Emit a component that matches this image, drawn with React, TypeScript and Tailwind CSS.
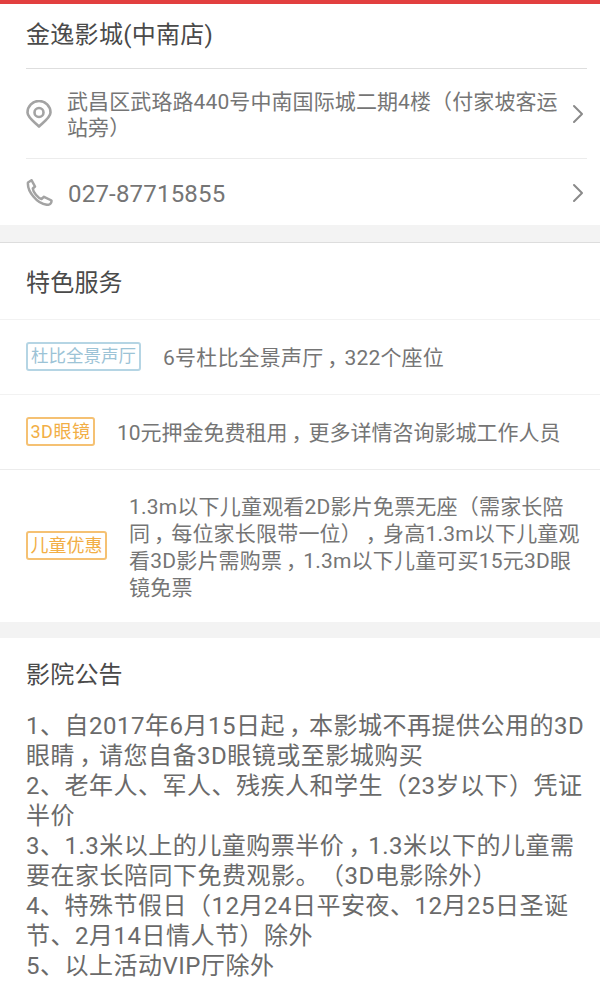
import { ChevronRight } from "lucide-react";

const font = "font-['Roboto','Noto_Sans_CJK_SC',sans-serif]";

// the comma sits in the middle of its cell in the screenshot
function Comma() {
  return <span className="inline-block w-[1em] text-center [font-feature-settings:'palt']">，</span>;
}

function PinIcon() {
  return (
    <svg width="26" height="28" viewBox="0 0 26 28" fill="none" stroke="#a3a3a3" strokeWidth="2.600">
      <path d="M13 26.500C9 22.500 1.500 17.500 1.500 12.500a11.500 11.500 0 0 1 23 0C24.500 17.500 17 22.500 13 26.500Z" strokeLinejoin="round" />
      <circle cx="13" cy="12.500" r="4.500" />
    </svg>
  );
}

function PhoneIcon() {
  return (
    <svg width="27" height="27" viewBox="0 0 27 27" fill="none" stroke="#a3a3a3" strokeWidth="2.500" strokeLinejoin="round">
      <path d="M2 3.500 5.500 1.200 9 7.500 6.800 9.500C7 13 12 19 15.500 20L18 17.800 25.500 21.500C25.800 24.500 23.500 26 21 25.800 11 25 1 12 2 3.500Z" />
    </svg>
  );
}

function Tag({ text, blue }: { text: string; blue?: boolean }) {
  return (
    <span
      className={
        blue
          ? "shrink-0 rounded-[3px] border-2 border-[#b5d5e4] px-[3px] h-[29px] flex items-center text-[17.500px] text-[#9cc3d6] whitespace-nowrap"
          : "shrink-0 rounded-[3px] border-2 border-[#f5c173] px-[2.500px] h-[29px] flex items-center text-[18px] text-[#f2ae45] whitespace-nowrap"
      }
    >
      {text}
    </span>
  );
}

export default function App() {
  return (
    <div className={`${font} [text-spacing-trim:space-all] w-[600px] h-[1000px] overflow-hidden bg-white`}>
      <div className="h-[4px] bg-[#e23f3f]" />
      <div className="px-[26px] h-[64px] flex items-center text-[24px] tracking-[0.3px] text-[#4a4a4a] pb-[2px]">金逸影城(中南店)</div>
      <div className="ml-[26px] mr-[13px] border-t border-[#dedede]">
        <div className="h-[89px] flex items-center">
          <div className="w-[41px] shrink-0">
            <PinIcon />
          </div>
          <div className="flex-1 text-[21px] tracking-[0.1px] leading-[26px] text-[#757575] pt-[2px]">武昌区武珞路440号中南国际城二期4楼（付家坡客运站旁）</div>
          <ChevronRight size={32} strokeWidth={1.500} className="shrink-0 text-[#8a8a8a] -mr-[7px] -ml-[8px]" />
        </div>
        <div className="border-t border-[#ececec] h-[67px] flex items-center">
          <div className="w-[42px] shrink-0">
            <PhoneIcon />
          </div>
          <div className="flex-1 text-[24px] tracking-[0.2px] text-[#757575] pt-[3px]">027-87715855</div>
          <ChevronRight size={32} strokeWidth={1.500} className="shrink-0 text-[#8a8a8a] -mr-[7px] mt-[2px]" />
        </div>
      </div>
      <div className="h-[18px] bg-[#f3f3f3] border-b border-[#dddddd]" />
      <div className="px-[26px] h-[77px] flex items-center text-[24px] tracking-[0.2px] text-[#4a4a4a] border-b border-[#f2f2f2] pt-[3px]">特色服务</div>
      <div className="h-[75px] px-[26px] pb-[2px] flex items-center gap-[22px] border-b border-[#f2f2f2]">
        <Tag text="杜比全景声厅" blue />
        <span className="text-[21px] tracking-[0.2px] text-[#757575] pt-[5px]">
          6号杜比全景声厅
          <Comma />
          322个座位
        </span>
      </div>
      <div className="h-[75px] px-[26px] pb-[2px] flex items-center gap-[22px] border-b border-[#ececec]">
        <span className="shrink-0 tracking-[0.5px]">
          <Tag text="3D眼镜" />
        </span>
        <span className="text-[21px] text-[#757575] pt-[5px]">
          10元押金免费租用
          <Comma />
          更多详情咨询影城工作人员
        </span>
      </div>
      <div className="h-[152px] pl-[26px] pb-[2px] flex items-center gap-[22px]">
        <Tag text="儿童优惠" />
        <div className="text-[21px] tracking-[0.2px] leading-[27px] text-[#757575] pt-[5px] whitespace-nowrap">
          <div>1.3m以下儿童观看2D影片免票无座（需家长陪</div>
          <div>
            同
            <Comma />
            每位家长限带一位）
            <Comma />
            身高1.3m以下儿童观
          </div>
          <div>
            看3D影片需购票
            <Comma />
            1.3m以下儿童可买15元3D眼
          </div>
          <div>镜免票</div>
        </div>
      </div>
      <div className="h-[16px] bg-[#f3f3f3]" />
      <div className="px-[26px] h-[72px] flex items-center text-[24px] tracking-[0.2px] text-[#4a4a4a] pt-[2px]">影院公告</div>
      <div className="pl-[26px] text-[24px] pt-[1px] tracking-[0.5px] leading-[30px] text-[#6a6a6a] whitespace-nowrap">
        <div>
          1、自2017年6月15日起
          <Comma />
          本影城不再提供公用的3D
        </div>
        <div>
          眼睛
          <Comma />
          请您自备3D眼镜或至影城购买
        </div>
        <div>2、老年人、军人、残疾人和学生（23岁以下）凭证</div>
        <div>半价</div>
        <div>
          3、1.3米以上的儿童购票半价
          <Comma />
          1.3米以下的儿童需
        </div>
        <div>要在家长陪同下免费观影。（3D电影除外）</div>
        <div>4、特殊节假日（12月24日平安夜、12月25日圣诞</div>
        <div>节、2月14日情人节）除外</div>
        <div>5、以上活动VIP厅除外</div>
      </div>
    </div>
  );
}
